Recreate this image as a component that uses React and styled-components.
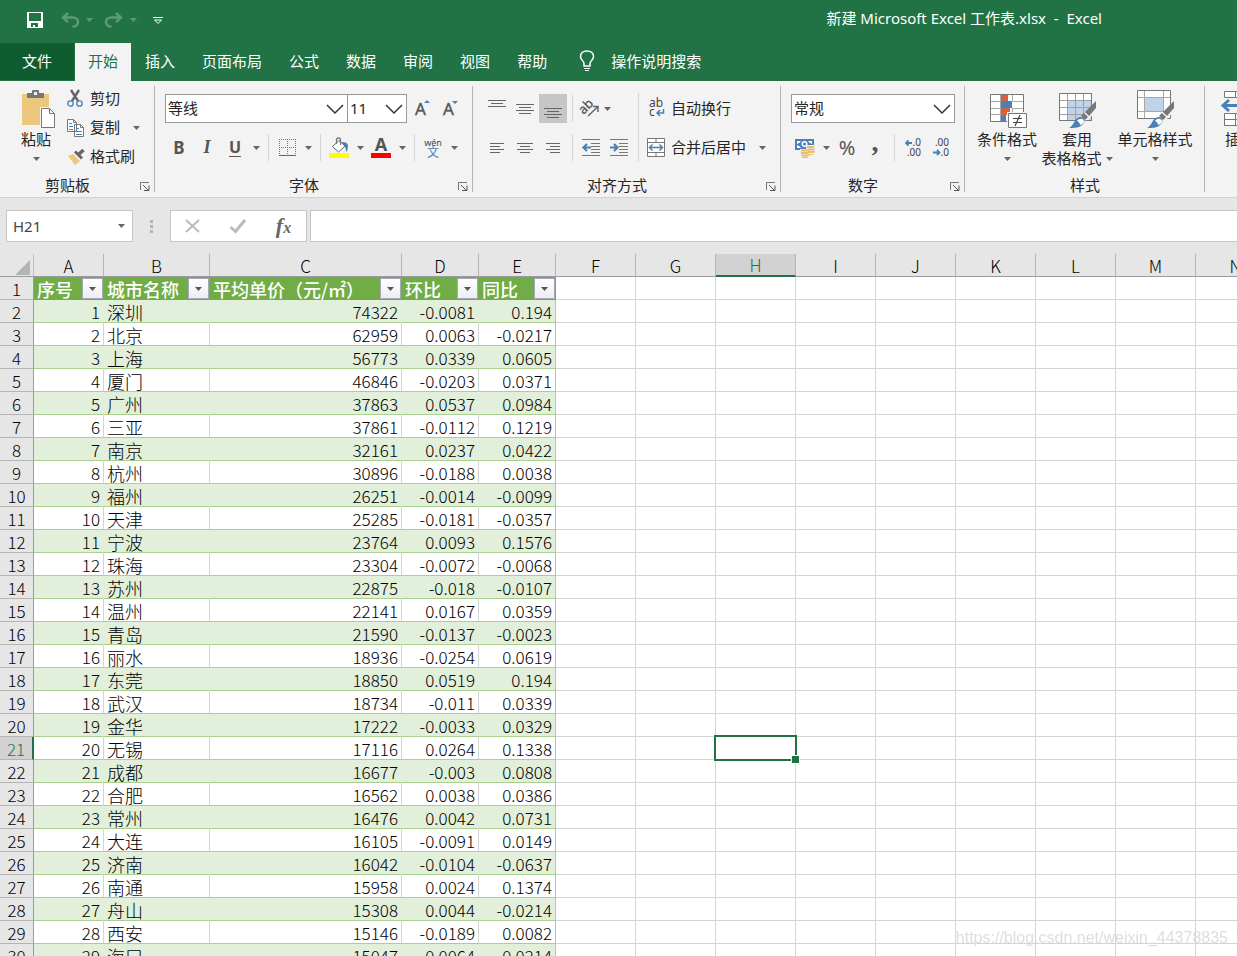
import React from "react";
import { useState } from "react";
import styled, { createGlobalStyle } from "styled-components";

const cities = [
  ["深圳", "74322", "-0.0081", "0.194"],
  ["北京", "62959", "0.0063", "-0.0217"],
  ["上海", "56773", "0.0339", "0.0605"],
  ["厦门", "46846", "-0.0203", "0.0371"],
  ["广州", "37863", "0.0537", "0.0984"],
  ["三亚", "37861", "-0.0112", "0.1219"],
  ["南京", "32161", "0.0237", "0.0422"],
  ["杭州", "30896", "-0.0188", "0.0038"],
  ["福州", "26251", "-0.0014", "-0.0099"],
  ["天津", "25285", "-0.0181", "-0.0357"],
  ["宁波", "23764", "0.0093", "0.1576"],
  ["珠海", "23304", "-0.0072", "-0.0068"],
  ["苏州", "22875", "-0.018", "-0.0107"],
  ["温州", "22141", "0.0167", "0.0359"],
  ["青岛", "21590", "-0.0137", "-0.0023"],
  ["丽水", "18936", "-0.0254", "0.0619"],
  ["东莞", "18850", "0.0519", "0.194"],
  ["武汉", "18734", "-0.011", "0.0339"],
  ["金华", "17222", "-0.0033", "0.0329"],
  ["无锡", "17116", "0.0264", "0.1338"],
  ["成都", "16677", "-0.003", "0.0808"],
  ["合肥", "16562", "0.0038", "0.0386"],
  ["常州", "16476", "0.0042", "0.0731"],
  ["大连", "16105", "-0.0091", "0.0149"],
  ["济南", "16042", "-0.0104", "-0.0637"],
  ["南通", "15958", "0.0024", "0.1374"],
  ["舟山", "15308", "0.0044", "-0.0214"],
  ["西安", "15146", "-0.0189", "0.0082"],
  ["海口", "15047", "0.0064", "0.0214"],
];

const tabs = ["开始", "插入", "页面布局", "公式", "数据", "审阅", "视图", "帮助"];
const headers = ["序号", "城市名称", "平均单价（元/㎡）", "环比", "同比"];
const columns = [
  { name: "A", width: 70 },
  { name: "B", width: 106 },
  { name: "C", width: 192 },
  { name: "D", width: 77 },
  { name: "E", width: 77 },
  ...["F", "G", "H", "I", "J", "K", "L", "M", "N"].map((name) => ({
    name,
    width: 80,
  })),
];
const emptyColumns = columns.slice(5);

/* ---------- icons ---------- */

const Arrow = ({ color = "#666" }) => (
  <svg width="7" height="4" viewBox="0 0 7 4">
    <path d="M0 0h7L3.5 4z" fill={color} />
  </svg>
);

const SaveIcon = () => (
  <svg width="16" height="16" viewBox="0 0 16 16">
    <path
      fill="#fff"
      fillRule="evenodd"
      d="M0 0h16v16H0zM2 1v8h12V1zM4 11v4h2v-2h2v2h3v-4z"
    />
  </svg>
);

const UndoIcon = ({ flip }) => (
  <svg
    width="18"
    height="16"
    viewBox="0 0 18 16"
    transform={flip ? "scale(-1 1)" : undefined}
  >
    <path
      d="M7 1L2 5.500L7 10M2.500 5.500H12c3 0 5 2 5 4.500S15 14.500 11.500 14.500"
      fill="none"
      stroke="#5c9a75"
      strokeWidth="2.500"
    />
  </svg>
);

const CustomizeIcon = () => (
  <svg width="10" height="9" viewBox="0 0 10 9">
    <path d="M0 1.500h10M1.500 4h7L5 7.500z" fill="none" stroke="#fff" />
  </svg>
);

const BulbIcon = () => (
  <svg width="16" height="22" viewBox="0 0 16 22" fill="none" stroke="#fff">
    <path
      d="M5 16v-2.500C5 11 1.500 10 1.500 6.500 1.500 3 4.500 1 8 1s6.500 2 6.500 5.500C14.500 10 11 11 11 13.500V16z"
      strokeWidth="1.500"
    />
    <path d="M5 18.500h6M6 20.500h4" />
  </svg>
);

const PasteIcon = () => (
  <svg width="36" height="40" viewBox="0 0 36 40">
    <path d="M4 6h27v31H4z" fill="#edc77e" />
    <path d="M9 10V5h5V3q0-1 1-1h5q1 0 1 1v2h5v5z" fill="#777" />
    <path d="M16 4h3v3h-3z" fill="#f3f3f3" />
    <path d="M22 19h14v21H22z" fill="#f3f3f3" />
    <path
      d="M23.500 20.500h8l5 5v14h-13zM31.500 20.500v5h5"
      fill="#fff"
      stroke="#777"
    />
  </svg>
);

const CutIcon = () => (
  <svg width="18" height="18" viewBox="0 0 18 18" fill="none">
    <path d="M4 0l7 11M12 0L5 11" stroke="#666" strokeWidth="2.400" />
    <circle cx="3.500" cy="13.500" r="2.700" stroke="#4a80b8" strokeWidth="1.300" />
    <circle cx="12.500" cy="13.500" r="2.700" stroke="#4a80b8" strokeWidth="1.300" />
  </svg>
);

const CopyIcon = () => (
  <svg width="18" height="18" viewBox="0 0 18 18">
    <path d="M.5.500h6l3 3v9h-9zM7.500 5.500h6l3 3v9h-9z" fill="#fff" stroke="#777" />
    <path d="M6.500.500v3h3M13.500 5.500v3h3" fill="none" stroke="#777" />
    <path
      d="M2 4.500h3M2 7.500h4M2 10.500h4M9 9.500h3M9 12.500h6M9 15.500h6"
      stroke="#4a80b8"
    />
  </svg>
);

const PainterIcon = () => (
  <svg width="18" height="18" viewBox="0 0 18 18">
    <path d="M1 8l5-2 7 7-5 4q-3-4-7-9z" fill="#edc77e" />
    <path d="M7 4.500l2-2 7 7-2 2z" fill="#666" />
    <path d="M12 6l4.500-4" stroke="#666" strokeWidth="3.500" />
  </svg>
);

const LauncherIcon = () => (
  <svg width="10" height="9" viewBox="0 0 10 9">
    <path d="M.5 8V.500H9" fill="none" stroke="#777" />
    <path d="M3 3l5 5M9 3.500v5H4" fill="none" stroke="#555" />
  </svg>
);

const ChevronIcon = () => (
  <svg width="18" height="10" viewBox="0 0 18 10">
    <path d="M1 1l8 8 8-8" fill="none" stroke="#333" strokeWidth="1.500" />
  </svg>
);

const LetterIcon = ({ down }) => (
  <svg width="18" height="20" viewBox="0 0 18 20">
    <text x="3" y="16" fontSize="17" fill="#555" stroke="#555" strokeWidth=".4">
      A
    </text>
    <path d={down ? "M12 2h6l-3 3z" : "M12 4h6l-3-3z"} fill="#4a80b8" />
  </svg>
);

const BordersIcon = () => (
  <svg width="17" height="17" viewBox="0 0 17 17">
    <path
      d="M0 .5h17M0 8.500h17M.5 0v16M8.500 0v16M16.500 0v16"
      fill="none"
      stroke="#777"
      strokeDasharray="1 1"
    />
    <path d="M0 16.500h17" stroke="#666" />
  </svg>
);

const FillIcon = () => (
  <svg width="20" height="22" viewBox="0 0 20 22">
    <path d="M0 16h20v5H0z" fill="#ff0" />
    <path d="M3.500 9.500L10 3.500l6 5.500-6.500 6z" fill="#fff" stroke="#666" />
    <path d="M7.500 7V3q0-2 2-2t2 2v5" fill="none" stroke="#777" strokeWidth="1.300" />
    <path d="M13 5q6 0 6 4t-2 6q0-5-2-6z" fill="#4a80b8" />
  </svg>
);

const FontColorIcon = () => (
  <svg width="20" height="22" viewBox="0 0 20 22">
    <text x="10" y="14" fontSize="18" fontWeight="bold" fill="#555" textAnchor="middle">
      A
    </text>
    <path d="M0 16h20v5H0z" fill="#f00" />
  </svg>
);

const PhoneticIcon = () => (
  <svg width="20" height="24" viewBox="0 0 20 24">
    <text x="10" y="10" fontSize="9" fill="#444" textAnchor="middle">
      wén
    </text>
    <text x="10" y="21" fontSize="12" fill="#4a80b8" textAnchor="middle">
      文
    </text>
  </svg>
);

const alignLines = {
  top: "M0 1.500h18M3 4.500h12M0 7.500h18",
  middle: "M0 5.500h18M3 8.500h12M0 11.500h18M3 14.500h12",
  bottom: "M0 9.500h18M3 12.500h12M0 15.500h18M3 18.500h12",
  left: "M2 5.500h14M2 8.500h10M2 11.500h14M2 14.500h10",
  center: "M1 5.500h16M4 8.500h10M1 11.500h16M4 14.500h10",
  right: "M2 5.500h14M6 8.500h10M2 11.500h14M6 14.500h10",
};

const AlignIcon = ({ kind }) => (
  <svg width="18" height="20" viewBox="0 0 18 20">
    <path d={alignLines[kind]} stroke="#666" />
  </svg>
);

const OrientationIcon = () => (
  <svg width="20" height="20" viewBox="0 0 20 20">
    <text
      x="1"
      y="12"
      fontSize="13"
      fill="#555"
      stroke="#555"
      strokeWidth=".3"
      transform="rotate(-45 7 11)"
    >
      ab
    </text>
    <path d="M8 17L18 7.500M13 7.500h5V13" fill="none" stroke="#666" strokeWidth="1.500" />
  </svg>
);

const IndentIcon = ({ out }) => (
  <svg width="18" height="17" viewBox="0 0 18 17">
    <path
      d="M0 .5h18M9 4.500h9M9 7.500h9M9 10.500h9M9 13.500h9M0 16.500h18"
      stroke="#777"
    />
    <path
      d={out ? "M9 8.500H2M5 5L1.500 8.500 5 12" : "M0 8.500h7M4 5l3.500 3.500L4 12"}
      fill="none"
      stroke="#4a80b8"
      strokeWidth="2.200"
    />
  </svg>
);

const WrapIcon = () => (
  <svg width="20" height="20" viewBox="0 0 20 20">
    <text x="3" y="8" fontSize="12" fill="#444">
      ab
    </text>
    <text x="3" y="17" fontSize="12" fill="#444">
      c
    </text>
    <path
      d="M17.500 10v4H11M14 11l-3 3 3 3"
      fill="none"
      stroke="#4a80b8"
      strokeWidth="1.500"
    />
  </svg>
);

const MergeIcon = () => (
  <svg width="20" height="20" viewBox="0 0 20 20">
    <path
      d="M1.500.500h17v18h-17zM1.500 4.500h17M1.500 14.500h17M10 0v4M10 15v4"
      fill="#fff"
      stroke="#777"
    />
    <path
      d="M4 9.500h12M6.500 6.500l-3 3 3 3M13.500 6.500l3 3-3 3"
      fill="none"
      stroke="#4a80b8"
      strokeWidth="1.500"
    />
  </svg>
);

const CurrencyIcon = () => (
  <svg width="20" height="20" viewBox="0 0 20 20">
    <path d="M0 1h19v11H0z" fill="#4a80b8" />
    <path d="M2 3h4q-1 2-4 3zM17 3h-4q1 2 4 3zM2 10h4q-1-2-4-3z" fill="#fff" />
    <circle cx="9.500" cy="6" r="3" fill="#fff" />
    <circle cx="9.500" cy="6" r="1.500" fill="#4a80b8" />
    <path d="M11 7h9v10h-6v3H5v-9h6z" fill="#f3f3f3" />
    <path
      d="M12.500 9h6M13 11.500h6M14 14h5M7 12.500h6M6.500 15h6M7 17.500h6"
      stroke="#e9bd6c"
      strokeWidth="1.800"
      strokeLinecap="round"
    />
    <path d="M7 19.500h6M13 16.500h5" stroke="#e9bd6c" />
  </svg>
);

const DecimalIcon = ({ less }) => (
  <svg width="18" height="20" viewBox="0 0 18 20" fontSize="10" fill="#444">
    <text x="17" y="8" textAnchor="end">
      {less ? ".00" : ".0"}
    </text>
    <text x="17" y="18" textAnchor="end">
      {less ? ".0" : ".00"}
    </text>
    <path
      d={less ? "M1 14.500h6M5 12l2.500 2.500L5 17" : "M8 5H2M4.500 2.500L2 5l2.500 2.500"}
      fill="none"
      stroke="#4a80b8"
      strokeWidth="1.800"
    />
  </svg>
);

const ConditionalIcon = () => (
  <svg width="40" height="40" viewBox="0 0 40 40">
    <path d="M3 6h33v28H3z" fill="#fff" />
    <path d="M14 7h7v6h-7zM14 20h9v7h-9z" fill="#d9603f" />
    <path d="M14 13h11v7H14zM14 27h5v7h-5z" fill="#4a80b8" />
    <path
      d="M3.500 13.500h10M25.500 13.500h11M3.500 20.500h10M25.500 20.500h11M3.500 26.500h10M13.500 6v28M25.500 6v7M25.500 20v14"
      fill="none"
      stroke="#a8a8a8"
    />
    <path d="M3.500 6.500h33v27h-33z" fill="none" stroke="#777" />
    <path d="M20 24h20v16H20z" fill="#f3f3f3" />
    <path d="M21.500 25.500h18v14h-18z" fill="#fff" stroke="#777" />
    <path d="M26 30.500h9M26 34.500h9M33 27l-5 11" stroke="#444" strokeWidth="1.200" />
  </svg>
);

const Brush = () => (
  <g>
    <path d="M21 33l8-9 11-11v9l-9 10z" fill="#f3f3f3" />
    <path d="M39 13v7l-7 8-4-4z" fill="#777" />
    <path d="M27 25l4 4-3 3-4-4z" fill="#777" />
    <path d="M12 40c5-2 5-10 11-11 5 0 6 5 2 8-3 3-8 3-13 3z" fill="#4a80b8" />
    <path d="M20 33c2-3 6-3 7 0 0 3-2 3-4 4 0-2-1-3-3-4z" fill="#fff" />
  </g>
);

const TableStyleIcon = () => (
  <svg width="40" height="40" viewBox="0 0 40 40">
    <path d="M2 5h33v28H2z" fill="#fff" />
    <path d="M11 12h24v21H11z" fill="#c0d3e8" />
    <path
      d="M2.500 5.500h32v27h-32zM2.500 12.500h32M2.500 19.500h32M2.500 26.500h32M10.500 5v28M18.500 5v28M26.500 5v28"
      fill="none"
      stroke="#a0a0a0"
    />
    <path d="M2.500 5.500h32v27h-32z" fill="none" stroke="#777" />
    <Brush />
  </svg>
);

const CellStyleIcon = () => (
  <svg width="40" height="40" viewBox="0 0 40 40">
    <path d="M2.500 2.500h33v28h-33z" fill="#fff" stroke="#777" />
    <path
      d="M3 9.500h32M3 23.500h32M9.500 3v27M28.500 3v27"
      fill="none"
      stroke="#a8a8a8"
    />
    <path d="M10 10h18v13H10z" fill="#c0d3e8" />
    <Brush />
  </svg>
);

const InsertIcon = () => (
  <svg width="40" height="40" viewBox="0 0 40 40">
    <path
      d="M4.500 3.500h32v6h-32zM15.500 3.500v6M26.500 3.500v6M4.500 25.500h32v12h-32zM4.500 31.500h32M15.500 25.500v12M26.500 25.500v12"
      fill="#fff"
      stroke="#777"
    />
    <path d="M18.500 14.500h18v6h-18z" fill="#c0d3e8" stroke="#777" />
    <path d="M3 17.500h16M9 12l-6 5.500L9 23" fill="none" stroke="#4a80b8" strokeWidth="3" />
  </svg>
);

const CancelIcon = () => (
  <svg width="18" height="16" viewBox="0 0 18 16">
    <path d="M1 2l13 12M14 2L1 14" stroke="#bbb" strokeWidth="2" />
  </svg>
);

const EnterIcon = () => (
  <svg width="18" height="16" viewBox="0 0 18 16">
    <path d="M.5 9l5 4.500L15 2" fill="none" stroke="#bbb" strokeWidth="3" />
  </svg>
);

/* ---------- parts ---------- */

const RibbonGroup = ({ label, launcher, minWidth, children }) => (
  <StGroup $minWidth={minWidth}>
    <StGroupBody>{children}</StGroupBody>
    <StGroupFooter>
      <span>{label}</span>
      {launcher && (
        <StLauncher type="button" aria-label={label}>
          <LauncherIcon />
        </StLauncher>
      )}
    </StGroupFooter>
  </StGroup>
);

const Combo = ({ label, value, width }) => (
  <StCombo $width={width}>
    <select aria-label={label} defaultValue={value}>
      <option>{value}</option>
    </select>
    <ChevronIcon />
  </StCombo>
);

const MenuArrow = ({ label }) => (
  <StArrowButton type="button" aria-label={label}>
    <Arrow />
  </StArrowButton>
);

export default function App() {
  const [activeTab, setActiveTab] = useState("开始");
  const [formula, setFormula] = useState("");
  const [cell, setCell] = useState("H21");

  return (
    <StApp>
      <GlobalStyle />
      <StTitleBar>
        <StQuickAccess>
          <button type="button" aria-label="保存">
            <SaveIcon />
          </button>
          <button type="button" aria-label="撤消">
            <UndoIcon />
            <Arrow color="#5c9a75" />
          </button>
          <button type="button" aria-label="恢复">
            <UndoIcon flip />
            <Arrow color="#5c9a75" />
          </button>
          <button type="button" aria-label="自定义快速访问工具栏">
            <CustomizeIcon />
          </button>
        </StQuickAccess>
        <StTitle>新建 Microsoft Excel 工作表.xlsx{"\u00a0 -\u00a0 "}Excel</StTitle>
      </StTitleBar>

      <StTabs>
        <StFileTab type="button">文件</StFileTab>
        {tabs.map((tab) => (
          <StTab
            type="button"
            key={tab}
            $active={tab === activeTab}
            onClick={() => setActiveTab(tab)}
          >
            {tab}
          </StTab>
        ))}
        <StTellMe type="button">
          <BulbIcon />
          操作说明搜索
        </StTellMe>
      </StTabs>

      <StRibbon>
        <RibbonGroup label="剪贴板" launcher>
          <StClipboard>
            <StBigButton type="button" $width={52}>
              <PasteIcon />
              <span>粘贴</span>
              <StArrowLine>
                <Arrow />
              </StArrowLine>
            </StBigButton>
            <StStack>
              <StTextButton type="button">
                <CutIcon />
                剪切
              </StTextButton>
              <StTextButton type="button">
                <CopyIcon />
                复制
                <StPushedArrow>
                  <Arrow />
                </StPushedArrow>
              </StTextButton>
              <StTextButton type="button">
                <PainterIcon />
                格式刷
              </StTextButton>
            </StStack>
          </StClipboard>
        </RibbonGroup>

        <RibbonGroup label="字体" launcher>
          <StRows>
            <StRow>
              <Combo label="字体" value="等线" width={183} />
              <Combo label="字号" value="11" width={60} />
              <StIconButton type="button" aria-label="增大字号">
                <LetterIcon />
              </StIconButton>
              <StIconButton type="button" aria-label="减小字号">
                <LetterIcon down />
              </StIconButton>
            </StRow>
            <StRow>
              <StIconButton type="button">
                <StBold>B</StBold>
              </StIconButton>
              <StIconButton type="button">
                <StItalic>I</StItalic>
              </StIconButton>
              <StIconButton type="button">
                <StUnderline>U</StUnderline>
              </StIconButton>
              <MenuArrow label="下划线" />
              <StDivider />
              <StIconButton type="button" aria-label="边框">
                <BordersIcon />
              </StIconButton>
              <MenuArrow label="边框选项" />
              <StDivider />
              <StIconButton type="button" aria-label="填充颜色">
                <FillIcon />
              </StIconButton>
              <MenuArrow label="填充颜色选项" />
              <StIconButton type="button" aria-label="字体颜色">
                <FontColorIcon />
              </StIconButton>
              <MenuArrow label="字体颜色选项" />
              <StDivider />
              <StIconButton type="button" aria-label="拼音">
                <PhoneticIcon />
              </StIconButton>
              <MenuArrow label="拼音选项" />
            </StRow>
          </StRows>
        </RibbonGroup>

        <RibbonGroup label="对齐方式" launcher minWidth={308}>
          <StRows>
            <StRow>
              {["top", "middle", "bottom"].map((kind) => (
                <StIconButton
                  type="button"
                  key={kind}
                  aria-label={kind}
                  $pressed={kind === "bottom"}
                >
                  <AlignIcon kind={kind} />
                </StIconButton>
              ))}
              <StDivider />
              <StSplitButton type="button" aria-label="方向">
                <OrientationIcon />
                <Arrow />
              </StSplitButton>
            </StRow>
            <StRow>
              {["left", "center", "right"].map((kind) => (
                <StIconButton type="button" key={kind} aria-label={kind}>
                  <AlignIcon kind={kind} />
                </StIconButton>
              ))}
              <StDivider />
              <StIconButton type="button" aria-label="减少缩进量">
                <IndentIcon out />
              </StIconButton>
              <StIconButton type="button" aria-label="增加缩进量">
                <IndentIcon />
              </StIconButton>
            </StRow>
          </StRows>
          <StDivider $tall />
          <StRows>
            <StTextButton type="button">
              <WrapIcon />
              自动换行
            </StTextButton>
            <StTextButton type="button">
              <MergeIcon />
              合并后居中
              <StPushedArrow>
                <Arrow />
              </StPushedArrow>
            </StTextButton>
          </StRows>
        </RibbonGroup>

        <RibbonGroup label="数字" launcher>
          <StRows>
            <Combo label="数字格式" value="常规" width={164} />
            <StRow>
              <StIconButton type="button" aria-label="会计数字格式">
                <CurrencyIcon />
              </StIconButton>
              <MenuArrow label="会计数字格式选项" />
              <StIconButton type="button">
                <StPercent>%</StPercent>
              </StIconButton>
              <StIconButton type="button">
                <StComma>,</StComma>
              </StIconButton>
              <StDivider />
              <StIconButton type="button" aria-label="增加小数位数">
                <DecimalIcon />
              </StIconButton>
              <StIconButton type="button" aria-label="减少小数位数">
                <DecimalIcon less />
              </StIconButton>
            </StRow>
          </StRows>
        </RibbonGroup>

        <RibbonGroup label="样式">
          <StBigButton type="button" $width={64}>
            <ConditionalIcon />
            <span>条件格式</span>
            <StArrowLine>
              <Arrow />
            </StArrowLine>
          </StBigButton>
          <StBigButton type="button" $width={76}>
            <TableStyleIcon />
            <span>套用</span>
            <StArrowLine>
              表格格式
              <Arrow />
            </StArrowLine>
          </StBigButton>
          <StBigButton type="button" $width={80}>
            <CellStyleIcon />
            <span>单元格样式</span>
            <StArrowLine>
              <Arrow />
            </StArrowLine>
          </StBigButton>
        </RibbonGroup>

        <RibbonGroup label="">
          <StBigButton type="button" $width={50}>
            <InsertIcon />
            <span>插入</span>
          </StBigButton>
        </RibbonGroup>
      </StRibbon>

      <StFormulaBar>
        <StNameBox>
          <input
            aria-label="名称框"
            value={cell}
            onChange={(e) => setCell(e.target.value)}
          />
          <Arrow />
        </StNameBox>
        <StGrip>
          <i />
          <i />
          <i />
        </StGrip>
        <StFormulaButtons>
          <button type="button" aria-label="取消">
            <CancelIcon />
          </button>
          <button type="button" aria-label="输入">
            <EnterIcon />
          </button>
          <button type="button" aria-label="插入函数">
            <StFx>
              f<small>x</small>
            </StFx>
          </button>
        </StFormulaButtons>
        <StFormulaInput
          aria-label="编辑栏"
          value={formula}
          onChange={(e) => setFormula(e.target.value)}
        />
      </StFormulaBar>

      <StSheet>
        <StTable>
          <colgroup>
            <StCol $width={34} />
            {columns.map((col) => (
              <StCol key={col.name} $width={col.width} />
            ))}
          </colgroup>
          <thead>
            <tr>
              <StCorner>
                <svg width="15" height="15" viewBox="0 0 15 15">
                  <path d="M15 0v15H0z" fill="#b4b4b4" />
                </svg>
              </StCorner>
              {columns.map((col) => (
                <StColHead key={col.name} scope="col" $active={col.name === "H"}>
                  {col.name}
                </StColHead>
              ))}
            </tr>
          </thead>
          <tbody>
            <tr>
              <StRowHead scope="row">1</StRowHead>
              {headers.map((header) => (
                <StFieldCell key={header}>
                  <div>
                    {header}
                    <StFilter type="button" aria-label={header + " 筛选"}>
                      <Arrow color="#555" />
                    </StFilter>
                  </div>
                </StFieldCell>
              ))}
              {emptyColumns.map((col) => (
                <StCell key={col.name} />
              ))}
            </tr>
            {cities.map(([city, price, mom, yoy], i) => (
              <tr key={city}>
                <StRowHead scope="row" $active={i + 2 === 21}>
                  {i + 2}
                </StRowHead>
                <StDataCell $band={i % 2 === 0}>{i + 1}</StDataCell>
                <StDataCell $band={i % 2 === 0} $text>
                  {city}
                </StDataCell>
                <StDataCell $band={i % 2 === 0}>{price}</StDataCell>
                <StDataCell $band={i % 2 === 0}>{mom}</StDataCell>
                <StDataCell $band={i % 2 === 0} $last>
                  {yoy}
                </StDataCell>
                {emptyColumns.map((col) => (
                  <StCell key={col.name}>
                    {col.name + (i + 2) === "H21" && <StSelection />}
                  </StCell>
                ))}
              </tr>
            ))}
          </tbody>
        </StTable>
      </StSheet>
      <StWatermark>https://blog.csdn.net/weixin_44378835</StWatermark>
    </StApp>
  );
}

const GlobalStyle = createGlobalStyle`
  * {
    box-sizing: border-box;
  }
  body {
    margin: 0;
    overflow: hidden;
  }
  button, input, select {
    font: inherit;
    color: inherit;
    border: none;
    padding: 0;
    margin: 0;
    background: none;
  }
  button {
    display: flex;
    align-items: center;
    justify-content: center;
    white-space: nowrap;
  }
  svg {
    display: block;
    flex-shrink: 0;
    overflow: visible;
  }
`;

const StApp = styled.div`
  display: flex;
  flex-direction: column;
  height: 100vh;
  overflow: hidden;
  background: #e6e6e6;
  color: #262626;
  font-family: "Noto Sans", "Noto Sans CJK SC", sans-serif;
  font-size: 15px;
  line-height: 19px;
`;

const StTitleBar = styled.header`
  display: flex;
  flex-shrink: 0;
  align-items: center;
  justify-content: space-between;
  height: 43px;
  padding: 0 135px 3px 27px;
  background: #217346;
  color: #fff;
`;

const StQuickAccess = styled.div`
  display: flex;
  align-items: center;
  gap: 12px;
  button {
    gap: 7px;
  }
  button:first-child {
    margin-right: 6px;
  }
  button:last-child {
    margin-left: 4px;
  }
`;

const StTitle = styled.div`
  padding-bottom: 3px;
  white-space: nowrap;
`;

const StTabs = styled.nav`
  display: flex;
  flex-shrink: 0;
  gap: 1px;
  height: 38px;
  background: #217346;
  color: #fff;
`;

const StFileTab = styled.button`
  padding: 0 22px 1px;
  margin-bottom: 1px;
  background: #0e5c2f;
`;

const StTab = styled.button`
  padding: 0 13px 2px;
  background: ${({ $active }) => ($active ? "#f3f3f3" : "transparent")};
  color: ${({ $active }) => ($active ? "#217346" : "#fff")};
`;

const StTellMe = styled.button`
  gap: 16px;
  padding: 0 0 2px 18px;
`;

const StRibbon = styled.div`
  display: flex;
  flex-shrink: 0;
  height: 117px;
  padding-top: 3px;
  overflow: hidden;
  background: #f3f3f3;
  border-bottom: 1px solid #d2d2d2;
`;

const StGroup = styled.section`
  display: flex;
  flex-direction: column;
  flex-shrink: 0;
  min-width: ${({ $minWidth }) => ($minWidth ? $minWidth + "px" : "auto")};
  background: linear-gradient(#b4b4b4, #b4b4b4) right 2px / 1px 106px no-repeat;
`;

const StGroupBody = styled.div`
  display: flex;
  flex-shrink: 0;
  height: 87px;
  padding: 0 10px;
`;

const StGroupFooter = styled.div`
  display: flex;
  align-items: center;
  height: 26px;
  padding-top: 3px;
  span {
    flex: 1;
    text-align: center;
  }
`;

const StLauncher = styled.button`
  width: 20px;
  height: 20px;
  padding-top: 2px;
`;

const StClipboard = styled.div`
  display: flex;
  gap: 2px;
  width: 135px;
`;

const StStack = styled.div`
  display: flex;
  flex: 1;
  flex-direction: column;
`;

const StRows = styled.div`
  display: flex;
  flex-direction: column;
  gap: 10px;
  padding-top: 10px;
`;

const StRow = styled.div`
  display: flex;
  min-width: 150px;
  height: 29px;
`;

const StIconButton = styled.button`
  width: 28px;
  height: 29px;
  color: #555;
  background: ${({ $pressed }) => ($pressed ? "#c6c6c6" : "transparent")};
`;

const StArrowButton = styled.button`
  width: 14px;
  height: 29px;
`;

const StSplitButton = styled.button`
  gap: 4px;
  padding: 0 3px;
`;

const StTextButton = styled.button`
  justify-content: flex-start;
  gap: 5px;
  height: 29px;
  padding-left: 3px;
`;

const StPushedArrow = styled.span`
  margin-left: 8px;
`;

const StBigButton = styled.button`
  flex-direction: column;
  justify-content: flex-start;
  width: ${({ $width }) => $width}px;
  padding-top: 4px;
  svg:first-child {
    margin-bottom: 2px;
  }
`;

const StArrowLine = styled.span`
  display: flex;
  align-items: center;
  justify-content: center;
  gap: 4px;
  height: 19px;
  && svg {
    margin: 0;
  }
`;

const StDivider = styled.i`
  flex-shrink: 0;
  width: 1px;
  height: ${({ $tall }) => ($tall ? "69px" : "27px")};
  margin: ${({ $tall }) => ($tall ? "9px 4px 0 5px" : "1px 4px 1px 5px")};
  background: #d4d4d4;
`;

const StBold = styled.b`
  font-size: 17px;
`;

const StItalic = styled.b`
  font-family: "Liberation Serif", serif;
  font-size: 18px;
  font-style: italic;
`;

const StUnderline = styled.b`
  height: 18px;
  font-size: 16px;
  line-height: 17px;
  border-bottom: 1px solid #555;
`;

const StPercent = styled.span`
  font-size: 20px;
`;

const StComma = styled.b`
  height: 24px;
  font-family: "Liberation Serif", serif;
  font-size: 28px;
  line-height: 12px;
`;

const StCombo = styled.div`
  display: flex;
  align-items: center;
  width: ${({ $width }) => $width}px;
  height: 29px;
  padding-right: 3px;
  background: #fff;
  border: 1px solid #999;
  & + & {
    margin-left: -1px;
  }
  select {
    flex: 1;
    min-width: 0;
    height: 27px;
    padding-left: 2px;
    appearance: none;
    outline: none;
  }
`;

const StFormulaBar = styled.div`
  display: flex;
  flex-shrink: 0;
  height: 56px;
  padding: 12px 0 12px 6px;
`;

const StNameBox = styled.div`
  display: flex;
  align-items: center;
  width: 127px;
  padding: 0 7px 0 6px;
  background: #fff;
  border: 1px solid #c6c6c6;
  color: #444;
  input {
    flex: 1;
    min-width: 0;
    outline: none;
  }
`;

const StGrip = styled.div`
  display: flex;
  flex-direction: column;
  align-items: center;
  justify-content: center;
  gap: 2px;
  width: 37px;
  i {
    width: 3px;
    height: 3px;
    background: #b4b4b4;
  }
`;

const StFormulaButtons = styled.div`
  display: flex;
  width: 137px;
  background: #fff;
  border: 1px solid #c6c6c6;
  button {
    flex: 1;
  }
`;

const StFx = styled.span`
  color: #666;
  font-family: "Liberation Serif", serif;
  font-size: 22px;
  font-style: italic;
  font-weight: bold;
  small {
    font-size: 16px;
  }
`;

const StFormulaInput = styled.input`
  && {
    flex: 1;
    min-width: 0;
    margin-left: 3px;
    padding: 0 6px;
    background: #fff;
    border: 1px solid #c6c6c6;
    border-right: none;
    outline: none;
  }
`;

const StSheet = styled.main`
  flex: 1;
  min-height: 0;
  overflow: hidden;
  background: #fff;
  color: #000;
  font-family: "Noto Sans CJK SC", sans-serif;
  font-size: 17px;
  font-weight: 300;
  line-height: 20px;
`;

const StTable = styled.table`
  width: max-content;
  table-layout: fixed;
  border-collapse: separate;
  border-spacing: 0;
  th,
  td {
    height: 23px;
    padding: 1px 0 0;
    white-space: nowrap;
  }
`;

const StCol = styled.col`
  width: ${({ $width }) => $width}px;
`;

const StCorner = styled.td`
  background: #e6e6e6;
  border-right: 1px solid #c0c0c0;
  border-bottom: 1px solid #9b9b9b;
  svg {
    margin: 3px 3px 0 15px;
  }
`;

const StColHead = styled.th`
  font-weight: 300;
  background: ${({ $active }) => ($active ? "#d2d2d2" : "#e6e6e6")};
  color: ${({ $active }) => ($active ? "#217346" : "#000")};
  border-right: 1px solid #b4b4b4;
  border-bottom: ${({ $active }) =>
    $active ? "2px solid #217346" : "1px solid #9b9b9b"};
`;

const StRowHead = styled.th`
  font-weight: 300;
  background: ${({ $active }) => ($active ? "#d2d2d2" : "#e6e6e6")};
  color: ${({ $active }) => ($active ? "#217346" : "#000")};
  border-right: ${({ $active }) =>
    $active ? "2px solid #217346" : "1px solid #9b9b9b"};
  border-bottom: 1px solid #b4b4b4;
`;

const StCell = styled.td`
  position: relative;
  border-right: 1px solid #d4d4d4;
  border-bottom: 1px solid #d4d4d4;
`;

const StDataCell = styled.td`
  && {
    padding: 1px 3px 0;
  }
  text-align: ${({ $text }) => ($text ? "left" : "right")};
  font-size: ${({ $text }) => ($text ? "18px" : "17px")};
  background: ${({ $band }) => ($band ? "#e2efda" : "#fff")};
  border-bottom: 1px solid #a9d08e;
  border-right: 1px solid
    ${({ $band, $last }) => ($last ? "#a9d08e" : $band ? "#e2efda" : "#d4d4d4")};
`;

const StFieldCell = styled.td`
  && {
    padding: 0;
  }
  background: #70ad47;
  color: #fff;
  font-size: 18px;
  font-weight: 500;
  div {
    display: flex;
    justify-content: space-between;
    height: 23px;
    padding: 1px 1px 1px 3px;
    line-height: 22px;
  }
`;

const StFilter = styled.button`
  flex-shrink: 0;
  width: 21px;
  height: 21px;
  background: linear-gradient(#fff, #eceef4);
  border: 1px solid #a5a9b8;
`;

const StSelection = styled.div`
  position: absolute;
  z-index: 1;
  inset: -2px;
  border: 2px solid #217346;
  &::after {
    content: "";
    position: absolute;
    right: -5px;
    bottom: -5px;
    width: 7px;
    height: 7px;
    background: #217346;
    border: 1px solid #fff;
  }
`;

const StWatermark = styled.div`
  position: fixed;
  right: 9px;
  bottom: 8px;
  color: #dedede;
  font-family: "Liberation Sans", sans-serif;
  font-size: 16px;
  line-height: 20px;
`;
